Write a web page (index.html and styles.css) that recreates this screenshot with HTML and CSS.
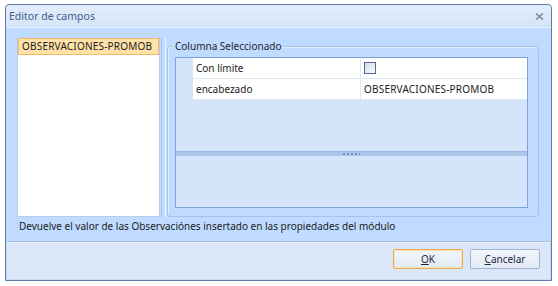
FILE: index.html
```html
<!DOCTYPE html>
<html>
<head>
<meta charset="utf-8">
<link rel="stylesheet" href="styles.css">
</head>
<body>
<div class="window">
  <div class="titlebar">
    <span class="title">Editor de campos</span>
    <svg class="close" width="9" height="7" viewBox="0 0 9 7"><path d="M1 0.5 L8 6.5 M8 0.5 L1 6.5" stroke="#7d8a9c" stroke-width="1.6"/></svg>
  </div>
  <div class="body">
    <div class="main">
      <div class="list">
        <div class="item selected">OBSERVACIONES-PROMOB</div>
      </div>
      <div class="splitter"></div>
      <div class="group">
        <div class="legend">Columna Seleccionado</div>
        <div class="grid">
          <div class="rows">
            <div class="row">
              <div class="gutter"></div>
              <div class="name">Con límite</div>
              <div class="value"><span class="check"></span></div>
            </div>
            <div class="row">
              <div class="gutter"></div>
              <div class="name">encabezado</div>
              <div class="value">OBSERVACIONES-PROMOB</div>
            </div>
          </div>
          <div class="gridsplit"><span class="grip"></span></div>
          <div class="desc"></div>
        </div>
      </div>
    </div>
    <div class="status">Devuelve el valor de las Observaciónes insertado en las propiedades del módulo</div>
  </div>
  <div class="footer">
    <button class="btn ok"><u>O</u>K</button>
    <button class="btn"><u>C</u>ancelar</button>
  </div>
</div>
</body>
</html>
```

FILE: styles.css
```css
html, body {
  margin: 0;
  padding: 0;
  background: #ffffff;
}
body {
  font-family: "Noto Sans", "DejaVu Sans", sans-serif;
  font-size: 10px;
  color: #1b1b1b;
}
.window {
  margin: 4px 0 0 5px;
  width: 545px;
  height: 275px;
  border: 1px solid #5d7aa8;
  border-radius: 4px 4px 0 0;
  box-shadow: inset 0 0 0 1px #c6daf6;
  background: #bfdbff;
  display: flex;
  flex-direction: column;
  overflow: hidden;
}
.titlebar {
  height: 22px;
  flex: none;
  display: flex;
  align-items: center;
  justify-content: space-between;
  padding: 0 6px 0 3px;
  background: linear-gradient(#e4eefb, #d3e3f8);
  border-bottom: 1px solid #e9f2fd;
  border-top-left-radius: 4px;
  border-top-right-radius: 4px;
}
.title {
  color: #3e5d8a;
  font-size: 10.5px;
}
.close {
  margin-right: 1px;
}
.body {
  flex: 1;
  display: flex;
  flex-direction: column;
  padding: 9px 11px 0 11px;
}
.main {
  display: flex;
  height: 180px;
}
.list {
  width: 141px;
  height: 178px;
  background: #ffffff;
  border: 1px solid #b6cce9;
  border-top-color: #bfdbff;
}
.item {
  height: 15px;
  line-height: 15px;
  padding-left: 3px;
  white-space: nowrap;
  letter-spacing: 0.2px;
}
.item.selected {
  background: #ffe2a9;
  border: 1px solid #f2b964;
}
.splitter {
  width: 3px;
  margin-left: 1px;
  border-left: 1px solid #a9c3e6;
  border-right: 1px solid #ecf4ff;
}
.group {
  position: relative;
  margin-left: 1px;
  margin-top: 9px;
  width: 372px;
  height: 171px;
  border: 1px solid #a7c3e8;
  border-radius: 3px;
  box-shadow: inset 1px 1px 0 #e0edfd;
  padding: 10px 0 0 7px;
  box-sizing: border-box;
}
.legend {
  position: absolute;
  top: -8px;
  left: 5px;
  padding: 0 2px;
  background: #bfdbff;
  line-height: 14px;
  color: #1f2530;
}
.grid {
  width: 353px;
  height: 151px;
  border: 1px solid #7ea3d9;
  background: #d4e4fa;
  display: flex;
  flex-direction: column;
  box-sizing: border-box;
}
.rows {
  height: 93px;
  flex: none;
}
.row {
  display: flex;
  height: 20px;
  border-bottom: 1px solid #dfe9f7;
}
.gutter {
  width: 17px;
  background: #d4e4fa;
  border-bottom: 1px solid #d4e4fa;
  margin-bottom: -1px;
}
.name {
  background: #ffffff;
  border-right: 1px solid #dfe9f7;
  padding-left: 3px;
  line-height: 20px;
  box-sizing: border-box;
  width: 168px;
}
.value {
  flex: 1;
  background: #ffffff;
  padding-left: 3px;
  line-height: 20px;
  display: flex;
  align-items: center;
  letter-spacing: 0.2px;
}
.check {
  width: 10px;
  height: 10px;
  border: 1px solid #4e6b96;
  background: linear-gradient(135deg, #d6dde8, #f6f8fb);
}
.gridsplit {
  height: 4px;
  flex: none;
  background: #acc5e9;
  border-top: 1px solid #9bb8e2;
  display: flex;
  justify-content: center;
  align-items: center;
}
.grip {
  width: 17px;
  height: 2px;
  background: repeating-linear-gradient(90deg, #6f93c9 0 2px, transparent 2px 4px);
}
.desc {
  flex: 1;
}
.status {
  margin-left: 2px;
  height: 19px;
  line-height: 19px;
  white-space: nowrap;
}
.footer {
  flex: none;
  height: 38px;
  background: #dbe7f8;
  border-top: 1px solid #a3bfe6;
  margin: 0 1px 1px 1px;
  display: flex;
  justify-content: flex-end;
  align-items: flex-start;
  gap: 7px;
  padding: 7px 10px 0 0;
  box-sizing: border-box;
  box-shadow: inset 0 1px 0 #eef4fc;
}
.btn {
  width: 70px;
  height: 20px;
  font-family: inherit;
  font-size: 10px;
  color: #1b2a44;
  background: linear-gradient(#f3f6fb, #e2eaf5);
  border: 1px solid #9fb4d2;
  border-radius: 2px;
  padding: 0;
}
.btn.ok {
  border-color: #f0a848;
  box-shadow: inset 0 0 0 1px #fbe4bd;
}
```
